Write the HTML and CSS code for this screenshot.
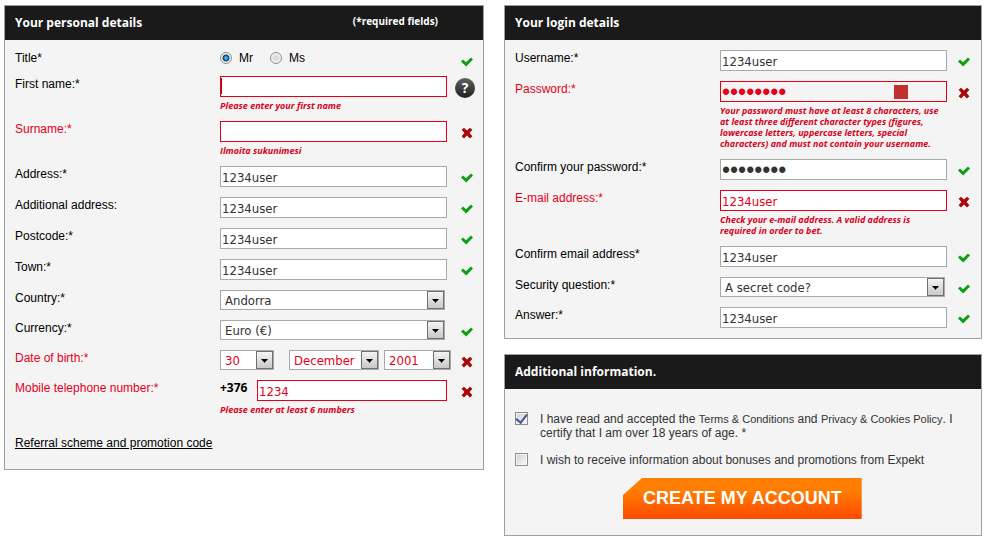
FILE: index.html
```html
<!DOCTYPE html>
<html lang="en">
<head>
<meta charset="utf-8">
<title>Create account</title>
<link rel="stylesheet" href="styles.css">
</head>
<body>
<svg class="sprite" aria-hidden="true">
  <symbol id="ok" viewBox="0 0 12 10"><path d="M0 4.4 2 2.4 5 5.2 10 .6 12 2.6 5.2 9.6Z" fill="#0aa00f"/></symbol>
  <symbol id="bad" viewBox="0 0 12 12"><path d="M3 .8 6 3.4 9 .8 11.4 2.8 8.6 6 11.4 9.2 9 11.4 6 8.6 3 11.4 .6 9.2 3.4 6 .6 2.8Z" fill="#a80a0a"/></symbol>
  <symbol id="down" viewBox="0 0 17 18"><path d="M5 8h7v1h-1v1h-1v1h-1v1H8v-1H7v-1H6V9H5Z" fill="#000"/></symbol>
</svg>
<form class="page">
  <section class="panel personal">
    <header class="head"><h2>Your personal details</h2><span class="required">(*required fields)</span></header>
    <div class="fields">
      <div class="row title-row">
        <span class="label" id="title-label">Title*</span>
        <div class="radios" role="radiogroup" aria-labelledby="title-label">
          <label><input type="radio" name="title" checked>Mr</label>
          <label><input type="radio" name="title">Ms</label>
        </div>
        <span class="mark"><svg class="ok"><use href="#ok"/></svg></span>
      </div>
      <div class="row">
        <label class="label" for="first">First name:*</label>
        <div><div class="caret-box"><input class="box invalid" id="first" type="text"><i class="caret"></i></div><p class="error">Please enter your first name</p></div>
        <span class="mark"><button class="help" type="button" aria-label="Help">?</button></span>
      </div>
      <div class="row bad">
        <label class="label" for="surname">Surname:*</label>
        <div><input class="box invalid" id="surname" type="text"><p class="error">Ilmoita sukunimesi</p></div>
        <span class="mark"><svg class="no"><use href="#bad"/></svg></span>
      </div>
      <div class="row">
        <label class="label" for="address">Address:*</label>
        <input class="box" id="address" type="text" value="1234user">
        <span class="mark"><svg class="ok"><use href="#ok"/></svg></span>
      </div>
      <div class="row">
        <label class="label" for="address2">Additional address:</label>
        <input class="box" id="address2" type="text" value="1234user">
        <span class="mark"><svg class="ok"><use href="#ok"/></svg></span>
      </div>
      <div class="row">
        <label class="label" for="postcode">Postcode:*</label>
        <input class="box" id="postcode" type="text" value="1234user">
        <span class="mark"><svg class="ok"><use href="#ok"/></svg></span>
      </div>
      <div class="row">
        <label class="label" for="town">Town:*</label>
        <input class="box" id="town" type="text" value="1234user">
        <span class="mark"><svg class="ok"><use href="#ok"/></svg></span>
      </div>
      <div class="row short">
        <label class="label" for="country">Country:*</label>
        <div class="select"><select id="country"><option>Andorra</option></select><svg class="arrow"><use href="#down"/></svg></div>
      </div>
      <div class="row short">
        <label class="label" for="currency">Currency:*</label>
        <div class="select"><select id="currency"><option>Euro (€)</option></select><svg class="arrow"><use href="#down"/></svg></div>
        <span class="mark"><svg class="ok"><use href="#ok"/></svg></span>
      </div>
      <div class="row short bad">
        <label class="label" for="day">Date of birth:*</label>
        <div class="dates">
          <div class="select day"><select id="day"><option>30</option></select><svg class="arrow"><use href="#down"/></svg></div>
          <div class="select month"><select aria-label="Month"><option>December</option></select><svg class="arrow"><use href="#down"/></svg></div>
          <div class="select year"><select aria-label="Year"><option>2001</option></select><svg class="arrow"><use href="#down"/></svg></div>
        </div>
        <span class="mark"><svg class="no"><use href="#bad"/></svg></span>
      </div>
      <div class="row bad">
        <label class="label" for="mobile">Mobile telephone number:*</label>
        <div><div class="phone"><span class="prefix">+376</span><input class="box invalid" id="mobile" type="text" value="1234"></div><p class="error">Please enter at least 6 numbers</p></div>
        <span class="mark"><svg class="no"><use href="#bad"/></svg></span>
      </div>
      <a class="referral" href="#">Referral scheme and promotion code</a>
    </div>
  </section>
  <div class="side">
    <section class="panel">
      <header class="head"><h2>Your login details</h2></header>
      <div class="fields">
        <div class="row">
          <label class="label" for="username">Username:*</label>
          <input class="box" id="username" type="text" value="1234user">
          <span class="mark"><svg class="ok"><use href="#ok"/></svg></span>
        </div>
        <div class="row bad">
          <label class="label" for="password">Password:*</label>
          <div><div class="strength"><input class="box secret invalid weak" id="password" type="password" value="12345678"><i class="swatch"></i></div><p class="error">Your password must have at least 8 characters, use at least three different character types (figures, lowercase letters, uppercase letters, special characters) and must not contain your username.</p></div>
          <span class="mark"><svg class="no"><use href="#bad"/></svg></span>
        </div>
        <div class="row">
          <label class="label" for="password2">Confirm your password:*</label>
          <input class="box secret" id="password2" type="password" value="12345678">
          <span class="mark"><svg class="ok"><use href="#ok"/></svg></span>
        </div>
        <div class="row bad">
          <label class="label" for="email">E-mail address:*</label>
          <div><input class="box invalid" id="email" type="text" value="1234user"><p class="error">Check your e-mail address. A valid address is required in order to bet.</p></div>
          <span class="mark"><svg class="no"><use href="#bad"/></svg></span>
        </div>
        <div class="row">
          <label class="label" for="email2">Confirm email address*</label>
          <input class="box" id="email2" type="text" value="1234user">
          <span class="mark"><svg class="ok"><use href="#ok"/></svg></span>
        </div>
        <div class="row short">
          <label class="label" for="question">Security question:*</label>
          <div class="select"><select id="question"><option>A secret code?</option></select><svg class="arrow"><use href="#down"/></svg></div>
          <span class="mark"><svg class="ok"><use href="#ok"/></svg></span>
        </div>
        <div class="row">
          <label class="label" for="answer">Answer:*</label>
          <input class="box" id="answer" type="text" value="1234user">
          <span class="mark"><svg class="ok"><use href="#ok"/></svg></span>
        </div>
      </div>
    </section>
    <section class="panel">
      <header class="head"><h2>Additional information.</h2></header>
      <div class="consent">
        <div class="agree"><input type="checkbox" id="terms" checked><label for="terms">I have read and accepted the <a href="#">Terms &amp; Conditions</a> and <a href="#">Privacy &amp; Cookies Policy</a>. I certify that I am over 18 years of age. *</label></div>
        <div class="agree"><input type="checkbox" id="news"><label for="news">I wish to receive information about bonuses and promotions from Expekt</label></div>
        <button class="create" type="submit">CREATE MY ACCOUNT</button>
      </div>
    </section>
  </div>
</form>
</body>
</html>
```
FILE: styles.css
```css
* { box-sizing: border-box; }
body {
  margin: 0;
  background: #fff;
  color: #000;
  font: 12px/16px "Liberation Sans", Arial, sans-serif;
}
.sprite { position: absolute; width: 0; height: 0; }
h2, p { margin: 0; }
.page {
  display: grid;
  grid-template-columns: 480fr 478fr;
  gap: 20px;
  align-items: start;
  padding: 5px 7px 9px 4px;
}
.side { display: grid; gap: 15px; }
.panel { --mark: 34px; border: 1px solid #a0a0a0; background: #f4f4f4; }
.personal { --mark: 36px; }
.head {
  display: flex;
  align-items: center;
  justify-content: space-between;
  height: 34px;
  padding: 0 45px 0 10px;
  background: #1a1a1a;
  color: #fff;
  font-family: "Open Sans", sans-serif;
}
.head h2 { font-size: 12px; font-weight: 700; }
.required { font-size: 10px; font-weight: 700; padding-bottom: 4px; }
.fields { display: grid; gap: 10px; padding: 10px 0 10px 10px; }
.row {
  display: grid;
  grid-template-columns: 205px minmax(0, 1fr) var(--mark);
  align-items: start;
  min-height: 21px;
}
.short { min-height: 20px; height: 20px; }
.title-row { height: 16px; min-height: 16px; }
.label { font-size: 12px; line-height: 16px; }
.bad .label { color: #e2001a; }
.mark { display: flex; align-items: center; justify-content: center; height: 21px; padding-top: 2px; }
.personal .mark svg { margin-left: 3px; }
.ok { width: 12px; height: 10px; }
.no { width: 12px; height: 12px; }
.box {
  display: block;
  width: 100%;
  height: 21px;
  margin: 0;
  padding: 2px 0 0 1px;
  border: 1px solid #a9a9a9;
  border-radius: 0;
  background: #fff;
  color: #333;
  font: 13px/16px "DejaVu Sans Condensed", Tahoma, sans-serif;
}
.secret { font: 23px/16px "Liberation Sans", Arial, sans-serif; }
.invalid { border-color: #e2001a; color: #e2001a; }
.weak { background: #f4f4f4; }
.error {
  margin-top: 3px;
  color: #d8001a;
  font: italic 700 9px/11px "Open Sans", sans-serif;
}
.caret-box, .strength { position: relative; }
.caret { position: absolute; left: 1px; top: 2px; width: 1px; height: 16px; background: #c00010; }
.swatch { position: absolute; right: 39px; top: 4px; width: 14px; height: 14px; background: #c03030; }
.help {
  flex: none;
  width: 20px;
  height: 20px;
  padding: 0;
  border: 0;
  border-radius: 50%;
  background: linear-gradient(#606060, #202020);
  color: #fff;
  font: 700 14px/20px "Open Sans", sans-serif;
}
.radios { display: flex; gap: 17px; }
.radios label { display: flex; align-items: center; gap: 7px; height: 16px; }
.radios input {
  appearance: none;
  width: 12px;
  height: 12px;
  margin: 0;
  border: 1px solid #8a8f94;
  border-radius: 50%;
  background: radial-gradient(circle, #dcdcdc 0 2px, #f8f8f8 5px);
}
.radios input:checked { background: radial-gradient(circle at 50% 50%, #3fb4e6 0 1px, #123c60 3px, #f4f4f4 4px); }
.select {
  position: relative;
  width: 225px;
  height: 20px;
  border: 1px solid #a9a9a9;
  background: #fff;
}
.select select {
  appearance: none;
  display: block;
  width: 100%;
  height: 18px;
  padding: 1px 18px 0 4px;
  border: 0;
  background: none;
  color: #333;
  font: 13px/17px "DejaVu Sans Condensed", Tahoma, sans-serif;
}
.bad .select select { color: #e2001a; }
.arrow {
  position: absolute;
  right: 0;
  top: 0;
  width: 17px;
  height: 18px;
  border: 1px solid #707070;
  background: linear-gradient(#f4f4f4, #c8c8c8);
  pointer-events: none;
}
.dates { display: flex; }
.dates .select { flex: none; }
.dates .day { width: 54px; margin-right: 15px; }
.dates .month { width: 90px; margin-right: 5px; }
.dates .year { width: 67px; }
.phone { display: flex; }
.prefix { flex: none; width: 37px; font: 700 12px/16px "Open Sans", sans-serif; }
.referral { justify-self: start; margin: 10px 0 8px; color: #000; font-size: 12px; line-height: 16px; }
.consent { padding: 23px 20px 16px 10px; color: #333; }
.agree { display: flex; align-items: flex-start; gap: 12px; margin-bottom: 13px; font-size: 12px; line-height: 14px; }
.agree a { color: #333; font-size: 11px; text-decoration: none; }
.agree input {
  appearance: none;
  flex: none;
  display: grid;
  place-items: center;
  width: 13px;
  height: 13px;
  margin: 0;
  border: 1px solid #8e8f8f;
  background: linear-gradient(135deg, #d0d0d4, #fafafa);
  box-shadow: inset 0 0 0 1px #f4f4f4;
}
.agree input:checked::before {
  content: "";
  width: 5px;
  height: 9px;
  margin-top: -2px;
  border: solid #40589a;
  border-width: 0 2px 2px 0;
  transform: rotate(38deg);
}
.create {
  display: block;
  height: 41px;
  margin: -2px 0 0 108px;
  padding: 0 20px;
  border: 0;
  background: linear-gradient(#ff7e00 30%, #ff4a00);
  clip-path: polygon(19px 0, 100% 0, 100% 100%, 0 100%, 0 17px);
  color: #fff;
  font: 700 18px/41px "Liberation Sans", Arial, sans-serif;
}
```
